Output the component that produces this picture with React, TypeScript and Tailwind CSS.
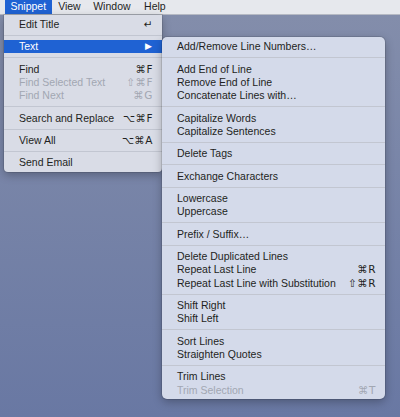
import { Fragment } from 'react'

type Item = { label: string; shortcut?: string; disabled?: boolean; active?: boolean; submenu?: boolean }
type Group = Item[]

const snippetMenu: Group[] = [
  [{ label: 'Edit Title', shortcut: '↵' }],
  [{ label: 'Text', active: true, submenu: true }],
  [
    { label: 'Find', shortcut: '⌘F' },
    { label: 'Find Selected Text', shortcut: '⇧⌘F', disabled: true },
    { label: 'Find Next', shortcut: '⌘G', disabled: true },
  ],
  [{ label: 'Search and Replace', shortcut: '⌥⌘F' }],
  [{ label: 'View All', shortcut: '⌥⌘A' }],
  [{ label: 'Send Email' }],
]

const textMenu: Group[] = [
  [{ label: 'Add/Remove Line Numbers…' }],
  [{ label: 'Add End of Line' }, { label: 'Remove End of Line' }, { label: 'Concatenate Lines with…' }],
  [{ label: 'Capitalize Words' }, { label: 'Capitalize Sentences' }],
  [{ label: 'Delete Tags' }],
  [{ label: 'Exchange Characters' }],
  [{ label: 'Lowercase' }, { label: 'Uppercase' }],
  [{ label: 'Prefix / Suffix…' }],
  [
    { label: 'Delete Duplicated Lines' },
    { label: 'Repeat Last Line', shortcut: '⌘R' },
    { label: 'Repeat Last Line with Substitution', shortcut: '⇧⌘R' },
  ],
  [{ label: 'Shift Right' }, { label: 'Shift Left' }],
  [{ label: 'Sort Lines' }, { label: 'Straighten Quotes' }],
  [{ label: 'Trim Lines' }, { label: 'Trim Selection', shortcut: '⌘T', disabled: true }],
]

function MenuRow({ item }: { item: Item }) {
  const color = item.active ? 'bg-[#1f62d3] text-white' : item.disabled ? 'text-[#a2a7b2]' : 'text-[#1e1f22]'
  return (
    <div className={`flex h-[13.33px] items-center justify-between pl-[15px] pr-[9px] ${color}`}>
      <span className="whitespace-nowrap leading-none">{item.label}</span>
      {item.shortcut && (
        <span className="whitespace-nowrap leading-none font-['DejaVu_Sans',sans-serif] text-[10.5px] tracking-[0.5px]">
          {item.shortcut}
        </span>
      )}
      {item.submenu && <span className="mr-[1px] text-[9px] leading-none text-white">▶</span>}
    </div>
  )
}

function Menu({ groups, className }: { groups: Group[]; className: string }) {
  return (
    <div className={`absolute py-[2.7px] shadow-[0_3px_10px_rgba(0,0,0,0.28)] ring-1 ring-black/10 ${className}`}>
      {groups.map((group, gi) => (
        <Fragment key={gi}>
          {gi > 0 && (
            <div className="flex h-[9px] items-center">
              <div className="h-px w-full bg-[#c2c6d1]" />
            </div>
          )}
          {group.map((item) => (
            <MenuRow key={item.label} item={item} />
          ))}
        </Fragment>
      ))}
    </div>
  )
}

export default function App() {
  return (
    <div className="relative h-[417px] w-[400px] overflow-hidden bg-gradient-to-b from-[#848eab] to-[#6978a3] font-['Liberation_Sans',Arial,sans-serif] text-[10.5px]">
      <div className="flex h-[15px] items-center border-b border-[#b5b9c3] bg-[#e6e8ed] pl-[5px] text-[10.5px] text-[#1e1f22]">
        <div className="flex h-full items-center bg-[#1f62d3] px-[5.5px] text-white">Snippet</div>
        <div className="ml-[1px] px-[5.5px]">View</div>
        <div className="ml-[1.5px] px-[5.5px]">Window</div>
        <div className="ml-[2.5px] px-[5.5px]">Help</div>
      </div>
      <Menu groups={snippetMenu} className="left-[4px] top-[15px] w-[158px] rounded-b-[4px] bg-[#d9dce6]" />
      <Menu groups={textMenu} className="left-[162px] top-[37.3px] w-[223px] rounded-[5px] bg-[#d4daea]" />
    </div>
  )
}
